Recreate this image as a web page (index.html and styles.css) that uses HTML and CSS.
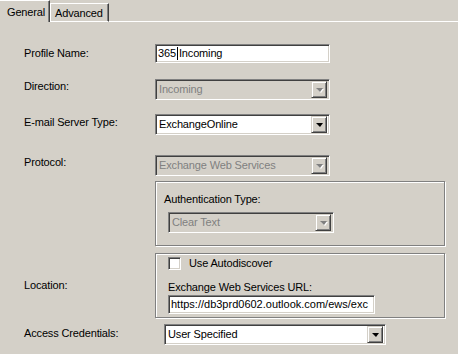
FILE: index.html
```html
<!DOCTYPE html>
<html>
<head>
<meta charset="utf-8">
<link rel="stylesheet" href="styles.css">
</head>
<body>
<div class="tabs">
  <div class="tab active">General</div>
  <div class="tab">Advanced</div>
  <div class="tab-fill"></div>
</div>
<div class="form">
  <div class="row r1">
    <div class="label">Profile Name:</div>
    <div class="field edit w175"><span>365</span><span class="caret"></span><span>Incoming</span></div>
  </div>
  <div class="row r2">
    <div class="label">Direction:</div>
    <div class="field combo disabled w175"><span class="val">Incoming</span><span class="btn"><span class="arrow"></span></span></div>
  </div>
  <div class="row r3">
    <div class="label">E-mail Server Type:</div>
    <div class="field combo w175"><span class="val">ExchangeOnline</span><span class="btn"><span class="arrow"></span></span></div>
  </div>
  <div class="row r4">
    <div class="label">Protocol:</div>
    <div class="field combo disabled w175"><span class="val">Exchange Web Services</span><span class="btn"><span class="arrow"></span></span></div>
  </div>
  <div class="row r5">
    <div class="label"></div>
    <div class="group g1">
      <div class="glabel">Authentication Type:</div>
      <div class="field combo disabled w166 auth"><span class="val">Clear Text</span><span class="btn"><span class="arrow"></span></span></div>
    </div>
  </div>
  <div class="row r6">
    <div class="label mid">Location:</div>
    <div class="group g2">
      <div class="check-row"><span class="checkbox"></span><span>Use Autodiscover</span></div>
      <div class="url-label">Exchange Web Services URL:</div>
      <div class="field edit w207 url"><span>https://db3prd0602.outlook.com/ews/exc</span></div>
    </div>
  </div>
  <div class="row r7">
    <div class="label">Access Credentials:</div>
    <div class="field combo w222 access"><span class="val">User Specified</span><span class="btn"><span class="arrow"></span></span></div>
  </div>
</div>
</body>
</html>
```
FILE: styles.css
```css
html, body {
  margin: 0;
  padding: 0;
}
body {
  background: #d4d0c8;
  font-family: "Liberation Sans", Arial, sans-serif;
  font-size: 11px;
  line-height: 13px;
  letter-spacing: -0.15px;
  color: #000;
  width: 458px;
  height: 354px;
  overflow: hidden;
}
.tabs {
  display: flex;
  height: 22px;
}
.tab {
  box-sizing: border-box;
  white-space: nowrap;
}
.tab.active {
  width: 50px;
  height: 22px;
  padding: 5px 0 0 7px;
  border-top: 1px solid #fff;
  border-right: 1px solid #404040;
  box-shadow: inset -1px 0 #808080;
}
.tab:not(.active) {
  align-self: flex-end;
  width: 59px;
  height: 19px;
  padding: 3px 0 0 4px;
  border-top: 1px solid #fff;
  border-left: 1px solid #fff;
  border-right: 1px solid #404040;
  border-bottom: 1px solid #fff;
  box-shadow: inset -1px 0 #808080;
}
.tab-fill {
  flex: 1;
  border-bottom: 1px solid #fff;
}
.form {
  padding-left: 24px;
}
.row {
  display: flex;
  align-items: flex-start;
}
.label {
  width: 131px;
  flex: none;
  padding-top: 3px;
  white-space: nowrap;
}
.label.mid {
  align-self: center;
  padding-top: 0;
}
.r1 { margin-top: 22px; }
.r2 { margin-top: 16px; }
.r3 { margin-top: 14px; }
.r4 { margin-top: 20px; }
.r5 { margin-top: 5px; }
.r6 { margin-top: 7px; }
.r7 { margin-top: 6px; }
.r2 .label, .r4 .label { padding-top: 1px; }
.r3 .label { padding-top: 2px; }

.field {
  box-sizing: border-box;
  background: #fff;
  border-style: solid;
  border-width: 1px;
  border-color: #808080 #fff #fff #808080;
  box-shadow: inset 1px 1px #404040, inset -1px -1px #d4d0c8;
  display: flex;
  align-items: center;
  white-space: nowrap;
  overflow: hidden;
}
.edit {
  height: 19px;
  padding: 0 0 0 2px;
}
.url {
  letter-spacing: 0;
}
.caret {
  display: inline-block;
  width: 1px;
  height: 13px;
  background: #000;
  margin: 0 1px 0 1px;
}
.combo {
  height: 21px;
  padding: 2px 2px 2px 3px;
}
.combo .val {
  flex: 1;
  overflow: hidden;
}
.combo.disabled {
  background: #d4d0c8;
  color: #808080;
}
.btn {
  box-sizing: border-box;
  width: 16px;
  height: 17px;
  flex: none;
  background: #d4d0c8;
  border-style: solid;
  border-width: 1px;
  border-color: #d4d0c8 #404040 #404040 #d4d0c8;
  box-shadow: inset 1px 1px #fff, inset -1px -1px #808080;
  display: flex;
  align-items: center;
  justify-content: center;
}
.arrow {
  width: 0;
  height: 0;
  border-left: 4px solid transparent;
  border-right: 3px solid transparent;
  border-top: 4px solid #000;
  margin-top: 1px;
}
.disabled .arrow {
  border-top-color: #808080;
  filter: drop-shadow(1px 1px 0 #fff);
}
.w175 { width: 175px; }
.w166 { width: 166px; }
.w207 { width: 207px; }
.w222 { width: 222px; }
.access { margin-left: 9px; }

.group {
  box-sizing: border-box;
  width: 290px;
  height: 65px;
  border: 1px solid #808080;
  box-shadow: inset 1px 1px #fff, 1px 1px #fff;
}
.g1 {
  padding: 11px 0 0 8px;
}
.auth {
  margin: 6px 0 0 4px;
}
.g2 {
  padding: 3px 0 0 12px;
}
.check-row {
  display: flex;
  align-items: center;
  height: 13px;
}
.checkbox {
  box-sizing: border-box;
  width: 13px;
  height: 13px;
  background: #fff;
  border-style: solid;
  border-width: 1px;
  border-color: #808080 #fff #fff #808080;
  box-shadow: inset 1px 1px #404040, inset -1px -1px #d4d0c8;
  margin-right: 8px;
}
.url-label {
  margin-top: 11px;
}
.g2 .edit {
  margin-top: 1px;
}
```
